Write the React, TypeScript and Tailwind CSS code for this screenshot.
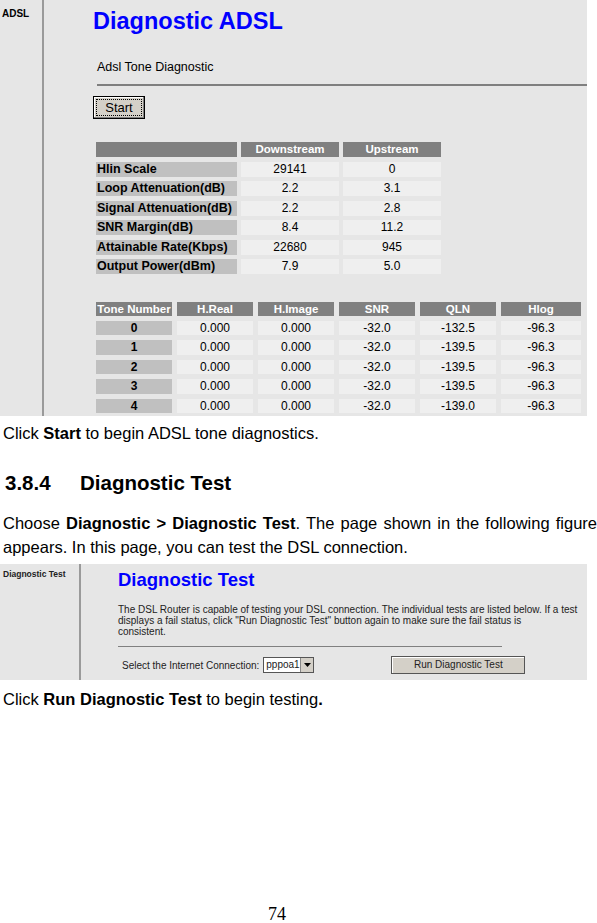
import React from "react";

const summary = [
  { label: "Hlin Scale", down: "29141", up: "0" },
  { label: "Loop Attenuation(dB)", down: "2.2", up: "3.1" },
  { label: "Signal Attenuation(dB)", down: "2.2", up: "2.8" },
  { label: "SNR Margin(dB)", down: "8.4", up: "11.2" },
  { label: "Attainable Rate(Kbps)", down: "22680", up: "945" },
  { label: "Output Power(dBm)", down: "7.9", up: "5.0" },
];

const tones = [
  ["0", "0.000", "0.000", "-32.0", "-132.5", "-96.3"],
  ["1", "0.000", "0.000", "-32.0", "-139.5", "-96.3"],
  ["2", "0.000", "0.000", "-32.0", "-139.5", "-96.3"],
  ["3", "0.000", "0.000", "-32.0", "-139.5", "-96.3"],
  ["4", "0.000", "0.000", "-32.0", "-139.0", "-96.3"],
];

const toneHeads = ["Tone Number", "H.Real", "H.Image", "SNR", "QLN", "Hlog"];

const AdslShot = () => (
  <div className="flex w-[587px] h-[416px] bg-[#e6e6e6] font-['Liberation_Sans',Arial,sans-serif]">
    <div className="w-[44px] shrink-0 border-r-2 border-[#9a9a9a] pl-[2px] pt-[9px] text-[10px] font-bold leading-none text-black">
      ADSL
    </div>
    <div className="flex-1 pl-[49px]">
      <h1 className="mt-[8px] text-[23.5px] font-bold leading-[26px] text-[#0000ff]">Diagnostic ADSL</h1>
      <div className="mt-[26px] pl-[4px] text-[12.5px] leading-[14px] text-black">Adsl Tone Diagnostic</div>
      <div className="mt-[10px] ml-[4px] h-[2px] bg-[#7f7f7f]" />
      <button className="mt-[10px] h-[23px] w-[52px] border border-black bg-[#d4d0c8] p-[2px] shadow-[inset_-1px_-1px_0_#808080,inset_1px_1px_0_#ffffff]">
        <span className="flex h-full w-full items-center justify-center border border-dotted border-black text-[13px] leading-none text-black">
          Start
        </span>
      </button>

      <div className="mt-[23px] ml-[3px] grid grid-cols-[141px_98px_98px] gap-x-[4px] gap-y-[4.5px] text-[12px] leading-[15px]">
        <div className="h-[15px] bg-[#808080]" />
        <div className="h-[15px] bg-[#808080] text-center text-[11.5px] font-bold leading-[15px] text-white">Downstream</div>
        <div className="h-[15px] bg-[#808080] text-center text-[11.5px] font-bold leading-[15px] text-white">Upstream</div>
        {summary.map((r) => (
          <React.Fragment key={r.label}>
            <div className="h-[15px] overflow-hidden whitespace-nowrap bg-[#c0c0c0] pl-[1px] text-[12.5px] font-bold text-black">{r.label}</div>
            <div className="h-[15px] bg-[#efefef] text-center text-black">{r.down}</div>
            <div className="h-[15px] bg-[#efefef] text-center text-black">{r.up}</div>
          </React.Fragment>
        ))}
      </div>

      <div className="mt-[27.5px] ml-[3px] grid grid-cols-[76px_76px_76px_76px_76px_80px] gap-x-[5px] gap-y-[5px] text-[12px]">
        {toneHeads.map((h) => (
          <div key={h} className="h-[14px] whitespace-nowrap bg-[#808080] text-center text-[11.5px] font-bold leading-[14px] text-white">
            {h}
          </div>
        ))}
        {tones.map((row) =>
          row.map((v, i) => (
            <div
              key={row[0] + "-" + i}
              className={
                i === 0
                  ? "h-[14.5px] bg-[#c0c0c0] text-center font-bold leading-[14.5px] text-black"
                  : "h-[14.5px] bg-[#efefef] text-center leading-[14.5px] text-black"
              }
            >
              {v}
            </div>
          ))
        )}
      </div>
    </div>
  </div>
);

const TestShot = () => (
  <div className="flex w-[587px] h-[116px] bg-[#e6e6e6] font-['Liberation_Sans',Arial,sans-serif]">
    <div className="w-[81px] shrink-0 border-r-2 border-[#9a9a9a] pl-[3px] pt-[6px] text-[8.5px] font-bold leading-none text-[#222]">
      Diagnostic Test
    </div>
    <div className="flex-1 pl-[37px]">
      <h2 className="mt-[5px] text-[18.5px] font-bold leading-[22px] text-[#0000ff]">Diagnostic Test</h2>
      <p className="mt-[13px] w-[466px] text-[10px] leading-[11px] text-[#222]">
        The DSL Router is capable of testing your DSL connection. The individual tests are listed below. If a test
        <br />
        displays a fail status, click "Run Diagnostic Test" button again to make sure the fail status is
        <br />
        consistent.
      </p>
      <div className="mt-[9px] h-[1px] w-[384px] bg-[#808080]" />
      <div className="mt-[9px] flex items-center">
        <span className="ml-[4px] text-[10px] text-[#222]">Select the Internet Connection:</span>
        <div className="ml-[4px] flex h-[16px] w-[51px] items-center border border-[#555] bg-white">
          <span className="flex-1 pl-[2px] text-[10px] leading-none text-[#222]">pppoa1</span>
          <span className="flex h-[14px] w-[13px] items-center justify-center border-l border-[#888] bg-[#d4d0c8]">
            <svg width="7" height="4" viewBox="0 0 7 4">
              <path d="M0 0h7L3.5 4z" fill="#000" />
            </svg>
          </span>
        </div>
        <button className="ml-[77px] h-[18px] w-[134px] border border-[#555] bg-[#d4d0c8] text-[10px] leading-none text-[#222] shadow-[inset_1px_1px_0_#ffffff]">
          Run Diagnostic Test
        </button>
      </div>
    </div>
  </div>
);

export default function App() {
  return (
    <div className="relative h-[923px] w-[597px] bg-white font-['Liberation_Sans',Arial,sans-serif] text-black">
      <AdslShot />
      <p className="mt-[8px] pl-[3px] text-[16.5px] leading-[18px]">
        Click <b>Start</b> to begin ADSL tone diagnostics.
      </p>
      <h3 className="mt-[30px] flex pl-[5px] text-[20.5px] font-bold leading-[22px]">
        <span className="w-[75px]">3.8.4</span>
        <span>Diagnostic Test</span>
      </h3>
      <p className="mt-[17px] pl-[3px] text-justify text-[16.5px] leading-[24px]">
        Choose <b>Diagnostic &gt; Diagnostic Test</b>. The page shown in the following figure appears. In this page, you can test the DSL connection.
      </p>
      <div className="mt-[5px]">
        <TestShot />
      </div>
      <p className="mt-[10px] pl-[3px] text-[16.5px] leading-[18px]">
        Click <b>Run Diagnostic Test</b> to begin testing<b>.</b>
      </p>
      <div className="absolute left-[268px] top-[905px] font-['Liberation_Serif',serif] text-[18px] leading-[18px]">
        74
      </div>
    </div>
  );
}
